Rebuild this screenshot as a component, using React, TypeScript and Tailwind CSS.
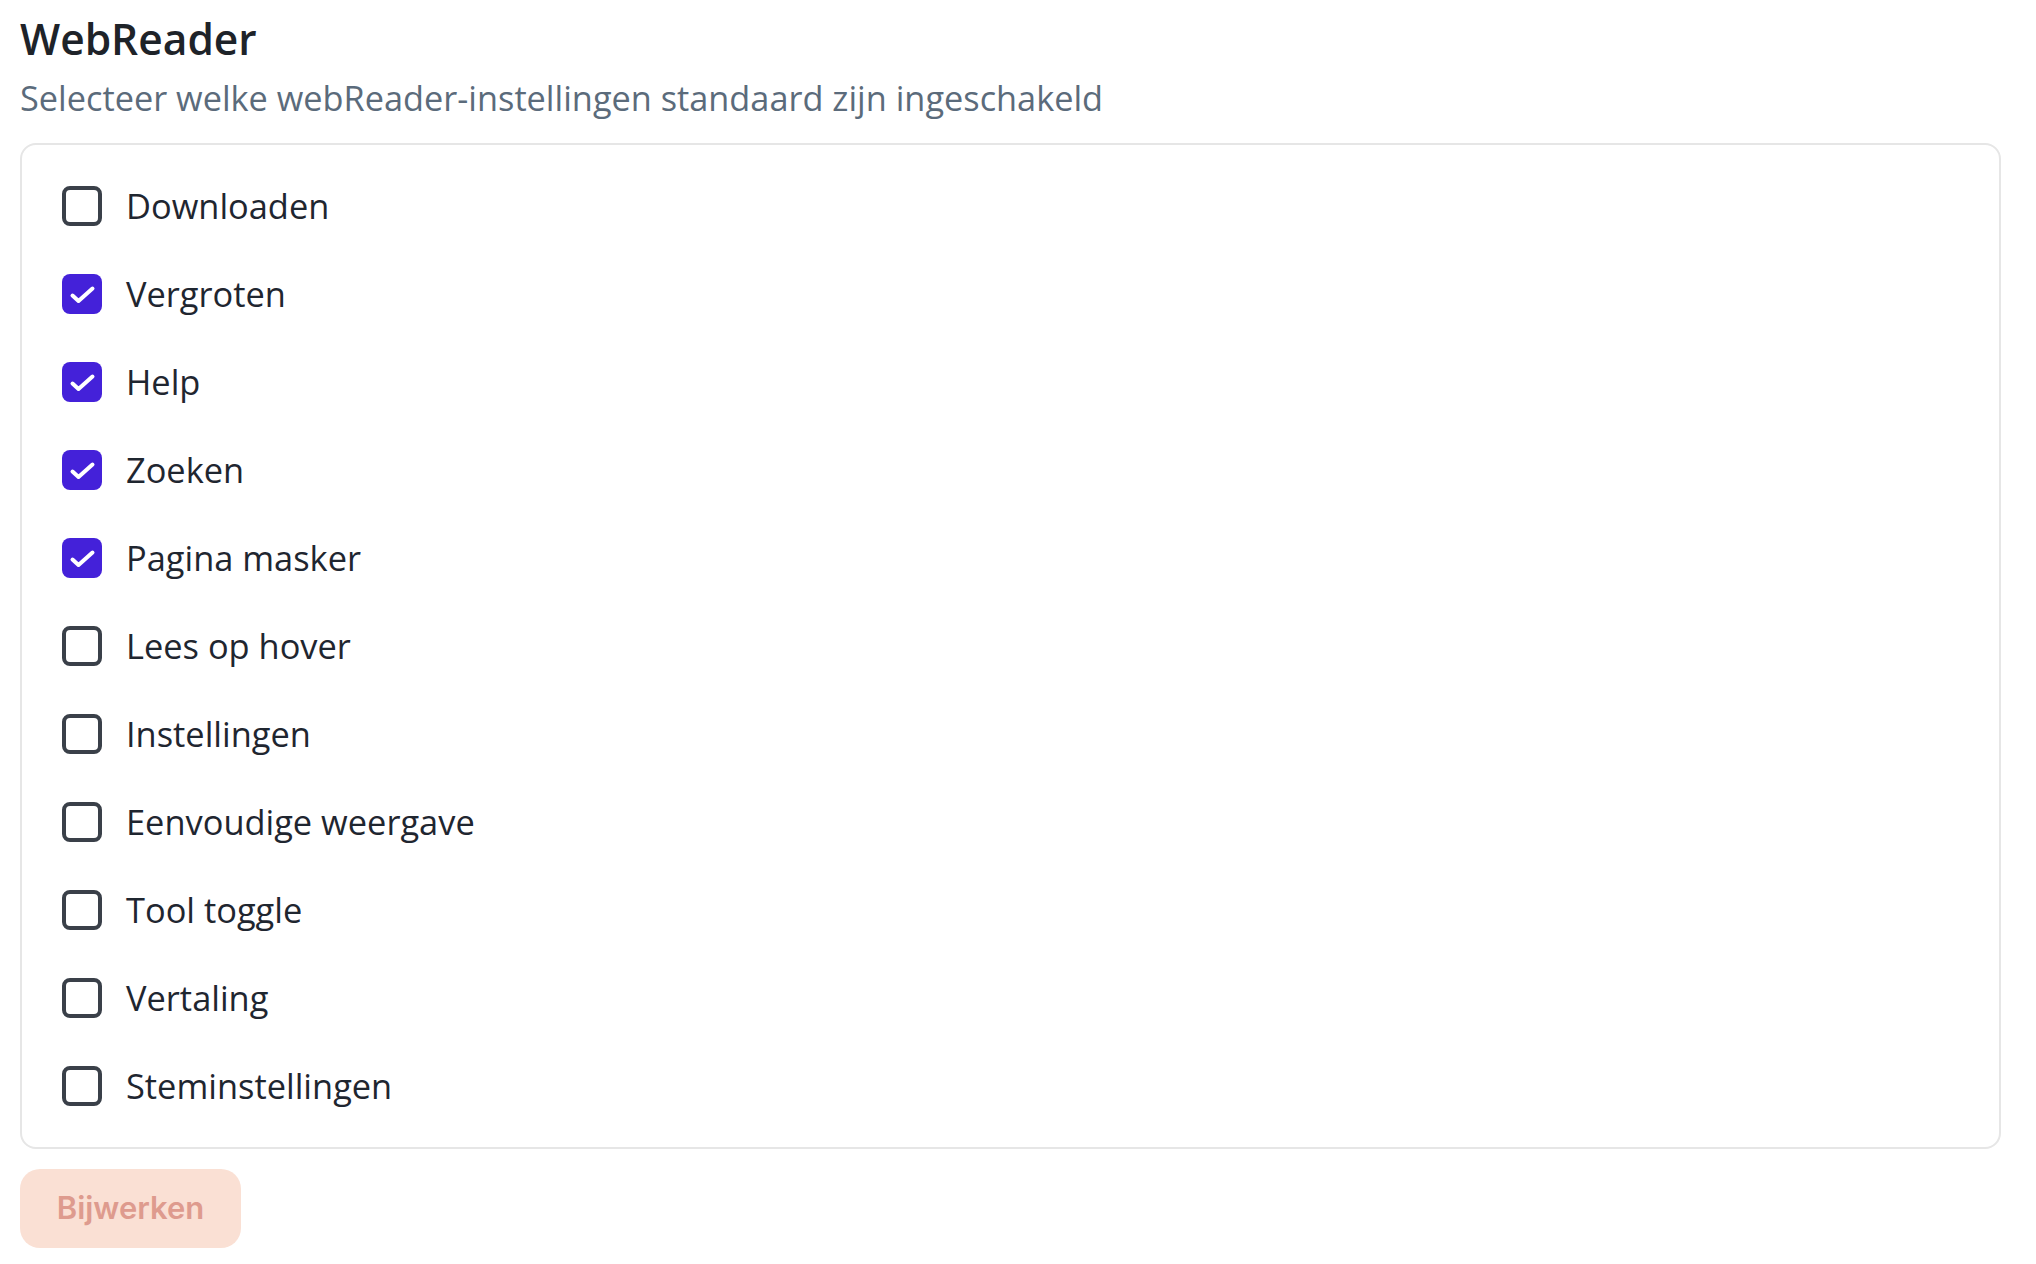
import React, { useState } from "react";

const items: { label: string; checked: boolean }[] = [
  { label: "Downloaden", checked: false },
  { label: "Vergroten", checked: true },
  { label: "Help", checked: true },
  { label: "Zoeken", checked: true },
  { label: "Pagina masker", checked: true },
  { label: "Lees op hover", checked: false },
  { label: "Instellingen", checked: false },
  { label: "Eenvoudige weergave", checked: false },
  { label: "Tool toggle", checked: false },
  { label: "Vertaling", checked: false },
  { label: "Steminstellingen", checked: false },
];

function Box({ checked }: { checked: boolean }) {
  if (checked) {
    return (
      <span className="flex h-[40px] w-[40px] shrink-0 items-center justify-center rounded-[8px] bg-[#4421d9]">
        <svg width="40" height="40" viewBox="0 0 40 40" fill="none">
          <polyline
            points="10.5,21.5 16.5,27 30.5,14.5"
            stroke="#ffffff"
            strokeWidth="4"
            strokeLinecap="round"
            strokeLinejoin="round"
          />
        </svg>
      </span>
    );
  }
  return (
    <span className="block h-[40px] w-[40px] shrink-0 rounded-[8px] border-[4px] border-[#3a4049] bg-white" />
  );
}

export default function App() {
  const [state, setState] = useState(items);
  return (
    <div className="min-h-screen bg-white pl-[20px] pt-[13px] font-['Open_Sans',sans-serif]">
      <h1 className="text-[42.5px] font-semibold leading-[52px] text-[#1e2329]">WebReader</h1>
      <p className="mt-[11px] text-[34.3px] leading-[44px] text-[#5b6b7b]">
        Selecteer welke webReader-instellingen standaard zijn ingeschakeld
      </p>
      <div className="mt-[23px] flex w-[1981px] flex-col gap-[48px] rounded-[16px] border-2 border-[#e6e6e6] px-[40px] pt-[41px] pb-[41px]">
        {state.map((it, i) => (
          <label
            key={it.label}
            className="flex h-[40px] cursor-pointer items-center gap-[24px]"
            onClick={() =>
              setState((s) => s.map((x, j) => (j === i ? { ...x, checked: !x.checked } : x)))
            }
          >
            <Box checked={it.checked} />
            <span className="text-[34.4px] leading-[40px] text-[#1f2630]">{it.label}</span>
          </label>
        ))}
      </div>
      <button className="mt-[20px] flex h-[79px] w-[221px] items-center justify-center rounded-[20px] bg-[#fae0d4] font-['Inter',sans-serif] text-[31px] font-semibold text-[#de9b8e]">
        Bijwerken
      </button>
    </div>
  );
}
